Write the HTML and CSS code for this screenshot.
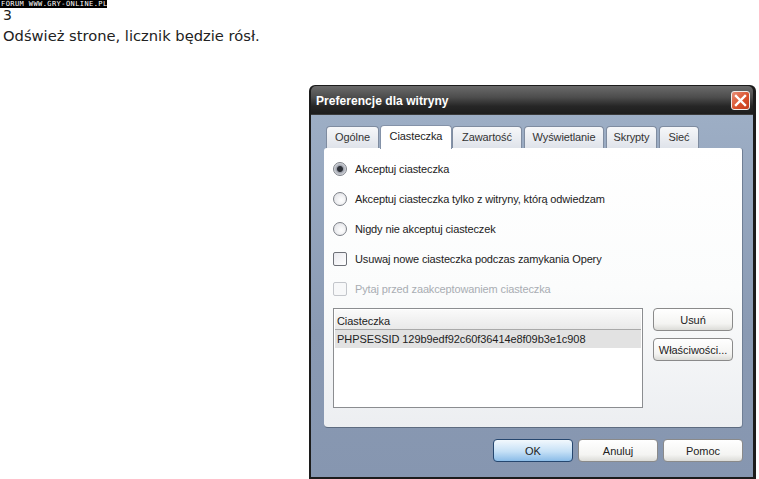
FILE: index.html
```html
<!DOCTYPE html>
<html lang="pl">
<head>
<meta charset="utf-8">
<title>Preferencje dla witryny</title>
<link rel="stylesheet" href="styles.css">
</head>
<body>
<div class="banner">FORUM WWW.GRY-ONLINE.PL</div>
<div class="count">3</div>
<div class="note">Odśwież strone, licznik będzie rósł.</div>
<section class="dialog">
  <header class="titlebar">
    <span class="title">Preferencje dla witryny</span>
    <span class="close"><svg width="13" height="13" viewBox="0 0 13 13"><path d="M2 2l9 9M11 2l-9 9" stroke="#fff" stroke-width="2.4" stroke-linecap="square" fill="none"/></svg></span>
  </header>
  <div class="client">
    <nav class="tabs">
      <span class="tab w-ogolne">Ogólne</span>
      <span class="tab active w-ciast">Ciasteczka</span>
      <span class="tab w-zaw">Zawartość</span>
      <span class="tab w-wys">Wyświetlanie</span>
      <span class="tab w-skr">Skrypty</span>
      <span class="tab w-siec">Sieć</span>
    </nav>
    <div class="panel">
      <div class="option"><span class="radio checked"></span>Akceptuj ciasteczka</div>
      <div class="option"><span class="radio"></span>Akceptuj ciasteczka tylko z witryny, którą odwiedzam</div>
      <div class="option"><span class="radio"></span>Nigdy nie akceptuj ciasteczek</div>
      <div class="option"><span class="check"></span>Usuwaj nowe ciasteczka podczas zamykania Opery</div>
      <div class="option disabled"><span class="check"></span>Pytaj przed zaakceptowaniem ciasteczka</div>
      <div class="cookies">
        <div class="list">
          <div class="list-head">Ciasteczka</div>
          <div class="list-row">PHPSESSID 129b9edf92c60f36414e8f09b3e1c908</div>
        </div>
        <div class="side">
          <button class="btn">Usuń</button>
          <button class="btn">Właściwości...</button>
        </div>
      </div>
    </div>
    <footer class="actions">
      <button class="btn primary">OK</button>
      <button class="btn">Anuluj</button>
      <button class="btn">Pomoc</button>
    </footer>
  </div>
</section>
</body>
</html>
```
FILE: styles.css
```css
* { box-sizing: border-box; }
html, body { margin: 0; padding: 0; height: 479px; overflow: hidden; background: #fff; }
body { font-family: "Liberation Sans", Arial, sans-serif; color: #111; }
.banner { width: 107px; height: 8px; background: #000; color: #fff; font: 400 7px/8px "DejaVu Sans Mono", monospace; letter-spacing: .42px; white-space: nowrap; overflow: hidden; padding-left: 1px; }
.count { font: 14px/13px "DejaVu Sans", sans-serif; padding-left: 3px; height: 13px; margin-top: 1px; color: #222; }
.note { font: 14.7px/20px "DejaVu Sans", sans-serif; padding-left: 3px; margin-top: 4px; color: #222; }
.dialog { width: 447px; height: 394px; margin: 39px 0 0 309px; background: #1c1c1c; border-radius: 6px 6px 0 0; padding: 1px 3px 2px 2px; display: flex; flex-direction: column; }
.titlebar { height: 28px; flex: none; display: flex; align-items: center; justify-content: space-between; padding: 0 3px 0 5px; background: linear-gradient(#6a6a6a, #4d4d4d 40%, #262626 72%, #1d1d1d); border-radius: 5px 5px 0 0; }
.title { color: #fff; font: 700 12px/14px "Liberation Sans", Arial, sans-serif; letter-spacing: .05px; position: relative; top: 1px; }
.close { width: 19px; height: 19px; display: flex; align-items: center; justify-content: center; border: 1px solid #eee; border-radius: 3px; background: linear-gradient(135deg, #e8907a, #d9512c 55%, #c43c1c); }
.client { flex: 1; background: linear-gradient(#9daec5, #8a9ab3 60%, #8696b0); padding: 10px 10px 0 13px; display: flex; flex-direction: column; border-top: 1px solid #3a3a3a; }
.tabs { display: flex; height: 23px; padding-left: 2px; align-items: flex-end; flex: none; }
.tab { height: 22px; margin-right: 2px; font-size: 11px; line-height: 21px; text-align: center; color: #333; background: linear-gradient(#f6f7f9, #dfe3ea); border: 1px solid #7f8ca0; border-bottom: none; border-radius: 4px 4px 0 0; letter-spacing: -.1px; white-space: nowrap; }
.tab.active { height: 24px; background: #fff; color: #222; border-color: #8492a8; margin: 0 0 -1px -1px; position: relative; z-index: 1; }
.w-ogolne { width: 53px; }
.w-ciast { width: 72px; }
.w-zaw { width: 70px; }
.w-wys { width: 80px; }
.w-skr { width: 51px; }
.w-siec { width: 40px; }
.panel { width: 419px; height: 280px; flex: none; background: linear-gradient(#fff, #fbfcfc 50%, #eceef1); border-radius: 3px 3px 4px 4px; border-bottom: 1px solid #5d6b80; border-right: 1px solid #6f7e94; padding: 6px 9px 0 9px; display: flex; flex-direction: column; }
.option { height: 30px; flex: none; display: flex; align-items: center; font-size: 11px; letter-spacing: -.13px; color: #222; white-space: nowrap; }
.option.disabled { color: #a9adb3; }
.radio { width: 14px; height: 14px; border-radius: 50%; margin-right: 8px; flex: none; border: 1px solid #7c8087; background: radial-gradient(circle at 60% 60%, #fff, #dcdde2); }
.radio.checked { background: radial-gradient(circle, #2c2f36 0 2.5px, #9da1ab 3.5px, #d9dbe0 6px); }
.check { width: 14px; height: 14px; border-radius: 2px; margin-right: 8px; flex: none; border: 1px solid #6e7178; background: linear-gradient(135deg, #e9e9ee, #fff); }
.disabled .check { border-color: #c3c6cb; background: #f7f8f9; }
.cookies { display: flex; align-items: flex-start; margin-top: 4px; }
.list { width: 310px; height: 100px; flex: none; background: #fff; border: 1px solid #8b8d90; padding: 1px; font-size: 11px; letter-spacing: -.07px; color: #222; white-space: nowrap; }
.list-head { height: 20px; padding-left: 2px; padding-top: 4px; line-height: 15px; background: linear-gradient(#fafafa, #e9e9e9); border-bottom: 1px solid #a9a9a9; }
.list-row { height: 18px; padding-left: 2px; line-height: 19px; background: #e2e2e2; }
.side { display: flex; flex-direction: column; gap: 7px; margin-left: 10px; }
.btn { width: 80px; height: 23px; padding: 0; font: 11px/20px "Liberation Sans", Arial, sans-serif; letter-spacing: -.05px; color: #222; border: 1px solid #8a8a8a; border-radius: 4px; background: linear-gradient(#fff, #f4f4f2 70%, #dcdcd8); white-space: nowrap; }
.actions { display: flex; justify-content: flex-end; gap: 5px; padding: 11px 0 0 0; width: 419px; }
.btn.primary { border-color: #26476f; border-width: 1.5px; background: linear-gradient(#f2f8fd, #c5e0f6 55%, #8bbce8); }
```
